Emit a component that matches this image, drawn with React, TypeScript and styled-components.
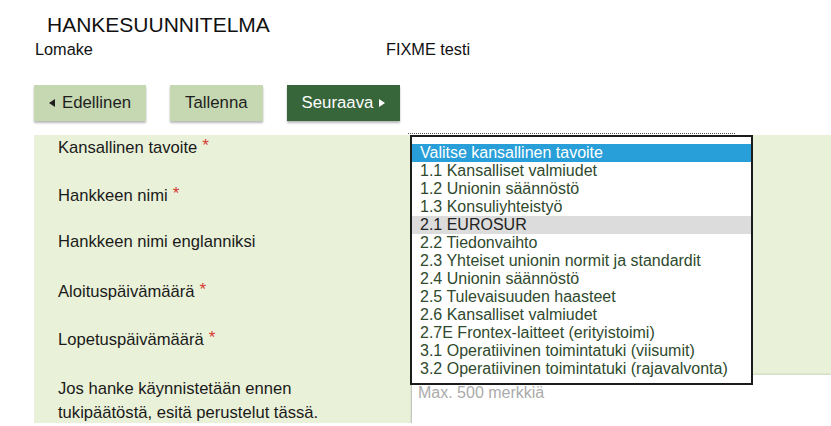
import React from "react";
import styled, { createGlobalStyle } from "styled-components";

const GlobalStyle = createGlobalStyle`
  html, body {
    margin: 0;
    padding: 0;
    overflow: hidden;
    background: #ffffff;
    font-family: "Liberation Sans", Arial, sans-serif;
    color: #1a1a1a;
  }
`;

const options = [
  "Valitse kansallinen tavoite",
  "1.1 Kansalliset valmiudet",
  "1.2 Unionin säännöstö",
  "1.3 Konsuliyhteistyö",
  "2.1 EUROSUR",
  "2.2 Tiedonvaihto",
  "2.3 Yhteiset unionin normit ja standardit",
  "2.4 Unionin säännöstö",
  "2.5 Tulevaisuuden haasteet",
  "2.6 Kansalliset valmiudet",
  "2.7E Frontex-laitteet (erityistoimi)",
  "3.1 Operatiivinen toimintatuki (viisumit)",
  "3.2 Operatiivinen toimintatuki (rajavalvonta)",
];

const fields = [
  { label: "Kansallinen tavoite", required: true },
  { label: "Hankkeen nimi", required: true },
  { label: "Hankkeen nimi englanniksi", required: false },
  { label: "Aloituspäivämäärä", required: true },
  { label: "Lopetuspäivämäärä", required: true },
];

function App() {
  return (
    <Page>
      <GlobalStyle />
      <Header>
        <Title>HANKESUUNNITELMA</Title>
        <SubRow>
          <SubText>Lomake</SubText>
          <SubText>FIXME testi</SubText>
        </SubRow>
      </Header>

      <Toolbar>
        <Button>
          <Arrow $dir="left" />
          Edellinen
        </Button>
        <Button>Tallenna</Button>
        <Button $primary>
          Seuraava
          <Arrow $dir="right" />
        </Button>
      </Toolbar>

      <Form>
        {fields.map((f, i) => (
          <React.Fragment key={f.label}>
            <Label>
              {f.label}
              {f.required && <Required>*</Required>}
            </Label>
            <Field>
              {i === 0 && (
                <SelectWrap>
                  <SelectBox />
                  <Dropdown>
                    {options.map((o, idx) => (
                      <Option
                        key={o}
                        $selected={idx === 0}
                        $hover={idx === 4}
                      >
                        {o}
                      </Option>
                    ))}
                  </Dropdown>
                </SelectWrap>
              )}
            </Field>
          </React.Fragment>
        ))}
        <Label $tall>
          Jos hanke käynnistetään ennen
          <br />
          tukipäätöstä, esitä perustelut tässä.
        </Label>
        <TextField>
          <TextArea placeholder="Max. 500 merkkiä" />
        </TextField>
      </Form>
    </Page>
  );
}

const Page = styled.div`
  width: 100%;
`;

const Header = styled.header`
  padding: 12px 0 0 0;
`;

const Title = styled.h1`
  margin: 0 0 1px 47px;
  font-size: 21px;
  line-height: 26px;
  font-weight: normal;
  color: #111;
`;

const SubRow = styled.div`
  display: grid;
  grid-template-columns: 351px 1fr;
  padding-left: 35px;
`;

const SubText = styled.div`
  font-size: 16.3px;
  line-height: 20px;
  color: #111;
`;

const Toolbar = styled.div`
  display: flex;
  gap: 24px;
  margin: 26px 0 0 34px;
  height: 50px;
`;

const Button = styled.button<{ $primary?: boolean }>`
  display: flex;
  align-items: center;
  height: 36px;
  padding: 0 15px;
  border: none;
  border-radius: 0;
  font-family: "Liberation Sans", Arial, sans-serif;
  font-size: 16.8px;
  background: ${(p) => (p.$primary ? "#37663a" : "#c5d8b1")};
  color: ${(p) => (p.$primary ? "#ffffff" : "#1e1e1e")};
  box-shadow: 0 2px 2px rgba(0, 0, 0, 0.28);
  cursor: pointer;
`;

const Arrow = styled.span<{ $dir: "left" | "right" }>`
  display: inline-block;
  width: 0;
  height: 0;
  border-top: 4px solid transparent;
  border-bottom: 4px solid transparent;
  ${(p) =>
    p.$dir === "left"
      ? "border-right: 6px solid currentColor; margin-right: 7px;"
      : "border-left: 6px solid currentColor; margin-left: 6px;"}
`;

const Form = styled.div`
  display: grid;
  grid-template-columns: 377px 1fr;
  grid-auto-rows: 48px;
  margin-left: 34px;
  background: #e9f1d8;
`;

const Label = styled.div<{ $tall?: boolean }>`
  padding: ${(p) => (p.$tall ? "2px" : "1px")} 0 0 24px;
  font-size: 16.6px;
  line-height: ${(p) => (p.$tall ? "24px" : "20px")};
  color: #1a1a1a;
`;

const Required = styled.span`
  color: #d63a32;
  font-size: 17px;
  margin-left: 5px;
  vertical-align: 2px;
`;

const Field = styled.div`
  position: relative;
`;

const TextField = styled.div`
  background: #ffffff;
  box-shadow: 0 -1px 2px rgba(0, 0, 0, 0.12);
  height: 60px;
`;

const TextArea = styled.textarea`
  box-sizing: border-box;
  width: 100%;
  height: 100%;
  padding: 8px 6px;
  border: none;
  border-left: 1px solid #c4c4c4;
  resize: none;
  font-family: "Liberation Sans", Arial, sans-serif;
  font-size: 16px;
  line-height: 20px;
  background: transparent;
  &::placeholder {
    color: #ababab;
  }
`;

const SelectWrap = styled.div`
  position: relative;
  display: flow-root;
`;

const SelectBox = styled.div`
  margin: -2px 0 0 -3px;
  width: 327px;
  height: 24px;
  border-top: 1px dotted #555;
`;

const Dropdown = styled.ul`
  position: absolute;
  top: 0;
  left: -1px;
  z-index: 2;
  box-sizing: border-box;
  width: 343px;
  margin: 0;
  padding: 7px 0 5px 0;
  list-style: none;
  background: #ffffff;
  border: 2px solid #1c1c1c;
`;

const Option = styled.li<{ $selected?: boolean; $hover?: boolean }>`
  height: 18px;
  padding-left: 8px;
  font-size: 16px;
  line-height: 18px;
  white-space: nowrap;
  background: ${(p) =>
    p.$selected ? "#289fd9" : p.$hover ? "#dcdcdc" : "transparent"};
  color: ${(p) =>
    p.$selected ? "#ffffff" : p.$hover ? "#222222" : "#2f4a2d"};
`;

export default App;
